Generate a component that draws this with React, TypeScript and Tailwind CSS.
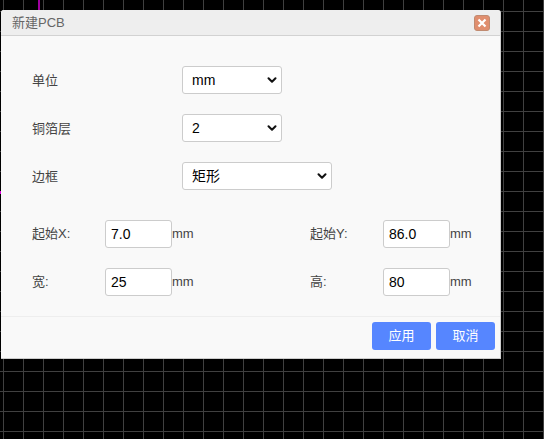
import { ChevronDown } from 'lucide-react';

const font = 'font-["Liberation_Sans","Noto_Sans_CJK_SC",sans-serif]';

function Select({ value, width }: { value: string; width: string }) {
  return (
    <div
      className={`flex h-[28px] items-center justify-between rounded-[3px] border border-[#cccccc] bg-white pl-[9px] pr-[2px] text-[14px] text-black ${width}`}
    >
      <span>{value}</span>
      <ChevronDown size={14} strokeWidth={3.5} className="text-[#111]" />
    </div>
  );
}

function Field({ label, value }: { label: string; value: string }) {
  return (
    <div className="flex items-center">
      <span className="w-[73px] text-[13px] text-[#444]">{label}</span>
      <div className="flex h-[28px] w-[67px] items-center rounded-[3px] border border-[#cccccc] bg-white pl-[5px] text-[14px] text-black">
        {value}
      </div>
      <span className="text-[13px] text-[#444]">mm</span>
    </div>
  );
}

function Row({ label, children }: { label: string; children: React.ReactNode }) {
  return (
    <div className="flex h-[28px] items-center">
      <span className="w-[150px] pt-px text-[13px] text-[#444]">{label}</span>
      {children}
    </div>
  );
}

export default function App() {
  return (
    <div
      className={`relative h-[439px] w-[544px] overflow-hidden bg-black bg-[linear-gradient(to_right,#404040_1px,transparent_1px),linear-gradient(to_bottom,#404040_1px,transparent_1px)] bg-[size:20px_20px] bg-[position:3px_11px] ${font}`}
    >
      <div className="absolute top-0 left-[38px] h-[10px] w-[2px] bg-[#a000a0]" />
      <div className="absolute top-[191px] left-0 h-[3px] w-px bg-[#e000e0]" />
      <div className="absolute top-[10px] left-[1px] flex h-[349px] w-[500px] flex-col rounded-t-[3px] border-r border-b border-[#cccccc] bg-[#f9f9f9]">
        <div className="flex h-[26px] shrink-0 items-center justify-between rounded-t-[3px] border-b border-[#d2d2d2] bg-[#eeeeee] pr-[10px] pl-[11px] text-[13px] text-[#666]">
          <span>新建PCB</span>
          <div className="mt-px flex h-[16px] w-[16px] items-center justify-center rounded-[3px] border border-[#c08a70] bg-[#e08e6e]">
            <svg width="10" height="10" viewBox="0 0 10 10">
              <path d="M1.5 1.5 L8.5 8.5 M8.5 1.5 L1.5 8.5" stroke="#fff" strokeWidth="2.2" />
            </svg>
          </div>
        </div>
        <div className="flex flex-1 flex-col pt-[30px] pl-[31px]">
          <div className="flex flex-col gap-[20px]">
            <Row label="单位">
              <Select value="mm" width="w-[100px]" />
            </Row>
            <Row label="铜箔层">
              <Select value="2" width="w-[100px]" />
            </Row>
            <Row label="边框">
              <Select value="矩形" width="w-[150px]" />
            </Row>
          </div>
          <div className="mt-[30px] grid grid-cols-[278px_1fr] gap-y-[20px]">
            <Field label="起始X:" value="7.0" />
            <Field label="起始Y:" value="86.0" />
            <Field label="宽:" value="25" />
            <Field label="高:" value="80" />
          </div>
        </div>
        <div className="flex h-[42px] shrink-0 items-start justify-end gap-[5px] border-t border-[#eeeeee] pt-[5px] pr-[5px]">
          <button className="h-[28px] w-[59px] rounded-[3px] bg-[#5686ff] text-[13px] text-white">应用</button>
          <button className="h-[28px] w-[59px] rounded-[3px] bg-[#5686ff] text-[13px] text-white">取消</button>
        </div>
      </div>
    </div>
  );
}
